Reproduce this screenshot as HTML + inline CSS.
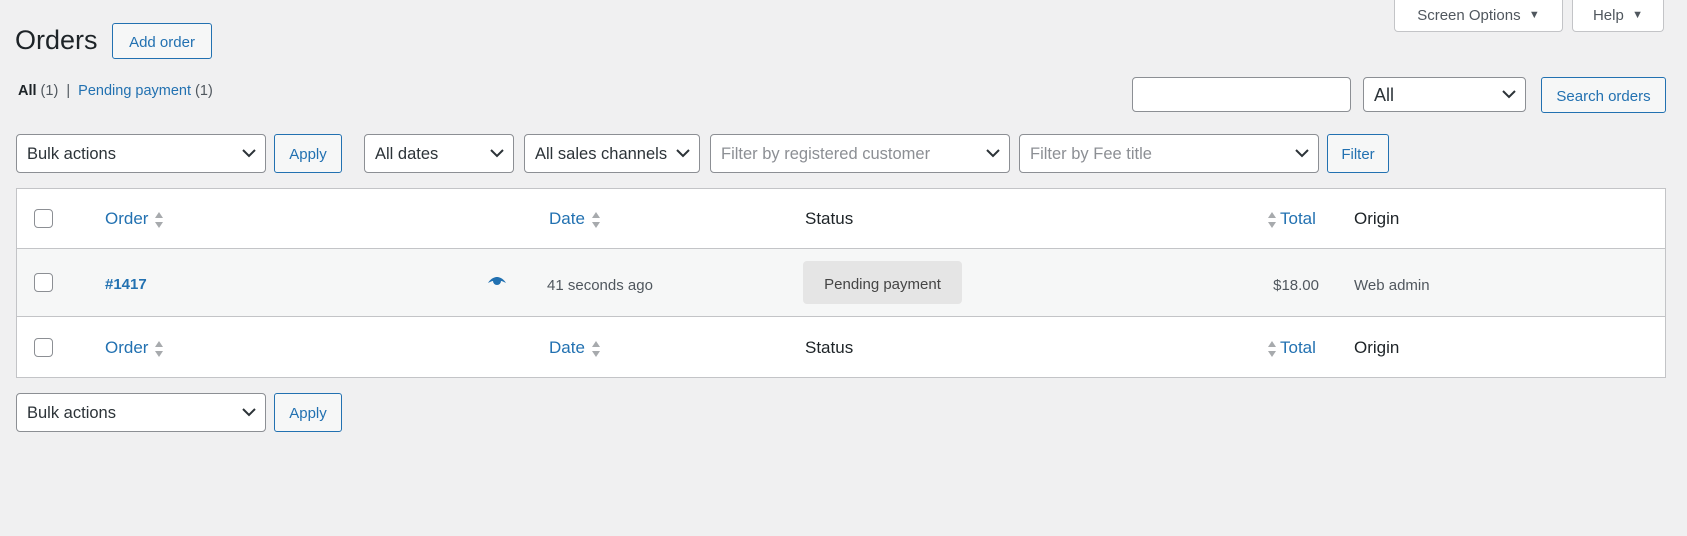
<!DOCTYPE html>
<html><head><meta charset="utf-8"><style>
*{box-sizing:border-box;margin:0;padding:0}
body{width:1687px;height:536px;background:#f0f0f1;font-family:"Liberation Sans",sans-serif;color:#1d2327;position:relative;overflow:hidden;font-size:15px}
.a{position:absolute}
.btn{position:absolute;border:1px solid #2271b1;color:#2271b1;background:#f6f7f7;border-radius:3px;display:flex;align-items:center;justify-content:center;font-size:15px;padding-top:2px}
.sel{position:absolute;border:1px solid #8c8f94;background:#fff;border-radius:4px;display:flex;align-items:center;padding-left:10px;padding-top:2px;font-size:16.5px;color:#2c3338}
.sel svg{position:absolute;right:9px;top:50%;margin-top:-5px}
.ph{color:#8c8f94}
.tab{position:absolute;top:-1px;height:33px;background:#fff;border:1px solid #c3c4c7;border-top:none;border-radius:0 0 4px 4px;color:#50575e;font-size:15px;display:flex;align-items:center;justify-content:center}
.cb{position:absolute;width:19px;height:19px;border:1px solid #8c8f94;border-radius:4px;background:#fff}
.lnk{color:#2271b1}
.sort{display:inline-block;vertical-align:middle;margin-left:6px}
</style></head><body>
<div class="a" style="left:15px;top:25px;font-size:27px;color:#1d2327">Orders</div>
<div class="btn" style="left:112px;top:23px;width:100px;height:36px;font-size:15px">Add order</div>
<div class="tab" style="left:1394px;width:169px">Screen Options&nbsp;&nbsp;<span style="font-size:11px">▼</span></div>
<div class="tab" style="left:1572px;width:92px">Help&nbsp;&nbsp;<span style="font-size:11px">▼</span></div>
<div class="a" style="left:18px;top:83px;font-size:14.5px;color:#50575e"><b style="color:#1d2327">All</b> (1) &nbsp;|&nbsp; <span class="lnk">Pending payment</span> (1)</div>
<div class="a" style="left:1132px;top:77px;width:219px;height:35px;border:1px solid #8c8f94;border-radius:4px;background:#fff"></div>
<div class="sel" style="left:1363px;top:77px;width:163px;height:35px;font-size:18px">All<svg width="14" height="9" viewBox="0 0 14 9"><path d="M1 1l6 6 6-6" fill="none" stroke="#2c3338" stroke-width="2"/></svg></div>
<div class="btn" style="left:1541px;top:77px;width:125px;height:36px">Search orders</div>

<div class="sel" style="left:16px;top:134px;width:250px;height:39px">Bulk actions<svg width="14" height="9" viewBox="0 0 14 9"><path d="M1 1l6 6 6-6" fill="none" stroke="#2c3338" stroke-width="2"/></svg></div>
<div class="btn" style="left:274px;top:134px;width:68px;height:39px">Apply</div>
<div class="sel" style="left:364px;top:134px;width:150px;height:39px">All dates<svg width="14" height="9" viewBox="0 0 14 9"><path d="M1 1l6 6 6-6" fill="none" stroke="#2c3338" stroke-width="2"/></svg></div>
<div class="sel" style="left:524px;top:134px;width:176px;height:39px">All sales channels<svg width="14" height="9" viewBox="0 0 14 9"><path d="M1 1l6 6 6-6" fill="none" stroke="#2c3338" stroke-width="2"/></svg></div>
<div class="sel" style="left:710px;top:134px;width:300px;height:39px"><span class="ph">Filter by registered customer</span><svg width="14" height="9" viewBox="0 0 14 9"><path d="M1 1l6 6 6-6" fill="none" stroke="#2c3338" stroke-width="2"/></svg></div>
<div class="sel" style="left:1019px;top:134px;width:300px;height:39px"><span class="ph">Filter by Fee title</span><svg width="14" height="9" viewBox="0 0 14 9"><path d="M1 1l6 6 6-6" fill="none" stroke="#2c3338" stroke-width="2"/></svg></div>
<div class="btn" style="left:1327px;top:134px;width:62px;height:39px">Filter</div>

<div class="a" style="left:16px;top:188px;width:1650px;height:190px;background:#fff;border:1px solid #c3c4c7"></div>
<div class="a" style="left:17px;top:248px;width:1648px;height:69px;background:#f6f7f7;border-top:1px solid #c3c4c7;border-bottom:1px solid #c3c4c7"></div>

<div class="cb" style="left:34px;top:209px"></div>
<div class="a lnk" style="left:105px;top:209px;font-size:17px">Order<svg class="sort" width="10" height="18" viewBox="0 0 10 18"><path d="M5 1l4 6H1z M5 17l4-6H1z" fill="#a7aaad"/></svg></div>
<div class="a lnk" style="left:549px;top:209px;font-size:17px">Date<svg class="sort" width="10" height="18" viewBox="0 0 10 18"><path d="M5 1l4 6H1z M5 17l4-6H1z" fill="#a7aaad"/></svg></div>
<div class="a" style="left:805px;top:209px;font-size:17px">Status</div>
<div class="a lnk" style="left:1267px;top:209px;font-size:17px"><svg class="sort" style="margin:0 3px 0 0" width="10" height="18" viewBox="0 0 10 18"><path d="M5 1l4 6H1z M5 17l4-6H1z" fill="#a7aaad"/></svg>Total</div>
<div class="a" style="left:1354px;top:209px;font-size:17px">Origin</div>

<div class="cb" style="left:34px;top:273px"></div>
<div class="a lnk" style="left:105px;top:276px;font-weight:bold;font-size:15px">#1417</div>
<svg class="a" style="left:487px;top:276px" width="20" height="12" viewBox="0 0 20 12"><path d="M1 7C4 2 8 1 10 1s6 1 9 6c-2-1-4-2-5-2a4 4 0 1 1-8 0c-1 0-3 1-5 2z" fill="#2271b1"/><circle cx="10" cy="6" r="2.5" fill="#2271b1"/></svg>
<div class="a" style="left:547px;top:277px;color:#50575e">41 seconds ago</div>
<div class="a" style="left:803px;top:261px;width:159px;height:43px;background:#e5e5e5;border-radius:4px;display:flex;align-items:center;justify-content:center;color:#454545;font-size:15px;padding-top:3px">Pending payment</div>
<div class="a" style="left:1200px;width:119px;text-align:right;top:277px;color:#50575e">$18.00</div>
<div class="a" style="left:1354px;top:277px;color:#50575e">Web admin</div>

<div class="cb" style="left:34px;top:338px"></div>
<div class="a lnk" style="left:105px;top:338px;font-size:17px">Order<svg class="sort" width="10" height="18" viewBox="0 0 10 18"><path d="M5 1l4 6H1z M5 17l4-6H1z" fill="#a7aaad"/></svg></div>
<div class="a lnk" style="left:549px;top:338px;font-size:17px">Date<svg class="sort" width="10" height="18" viewBox="0 0 10 18"><path d="M5 1l4 6H1z M5 17l4-6H1z" fill="#a7aaad"/></svg></div>
<div class="a" style="left:805px;top:338px;font-size:17px">Status</div>
<div class="a lnk" style="left:1267px;top:338px;font-size:17px"><svg class="sort" style="margin:0 3px 0 0" width="10" height="18" viewBox="0 0 10 18"><path d="M5 1l4 6H1z M5 17l4-6H1z" fill="#a7aaad"/></svg>Total</div>
<div class="a" style="left:1354px;top:338px;font-size:17px">Origin</div>

<div class="sel" style="left:16px;top:393px;width:250px;height:39px">Bulk actions<svg width="14" height="9" viewBox="0 0 14 9"><path d="M1 1l6 6 6-6" fill="none" stroke="#2c3338" stroke-width="2"/></svg></div>
<div class="btn" style="left:274px;top:393px;width:68px;height:39px">Apply</div>
</body></html>
